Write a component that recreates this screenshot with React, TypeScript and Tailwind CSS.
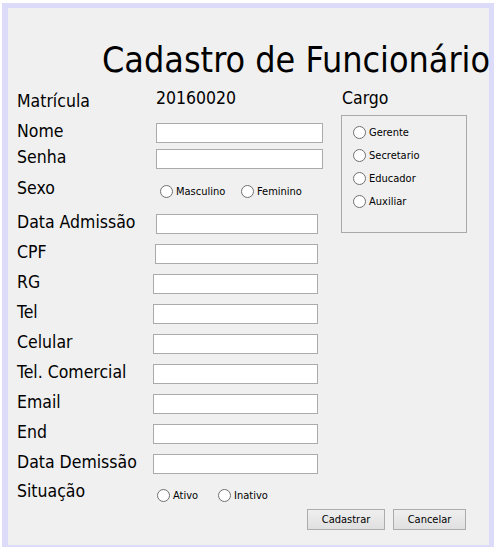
import React from "react";

function Radio({ label, className = "" }: { label: string; className?: string }) {
  return (
    <div className={"flex items-center " + className}>
      <span className="w-[13px] h-[13px] rounded-full border border-[#707070] bg-white shrink-0" />
      <span className="ml-[3px] text-[11px] leading-none text-black whitespace-nowrap">{label}</span>
    </div>
  );
}

function FieldRow({
  label,
  lw,
  fw,
  mt,
}: {
  label: string;
  lw: string;
  fw: string;
  mt: string;
}) {
  return (
    <div className={"flex items-center h-[20px] pl-[9px] " + mt}>
      <span className={"text-[17.5px] leading-none pb-[3px] whitespace-nowrap " + lw}>{label}</span>
      <input type="text" className={"h-[20px] border border-[#ababab] bg-white outline-none " + fw} />
    </div>
  );
}

export default function App() {
  return (
    <div className="w-[499px] h-[547px] bg-white overflow-hidden [font-family:'DejaVu_Sans_Condensed','DejaVu_Sans',sans-serif] text-black">
      <div className="ml-[2px] mt-[3px] w-[492px] h-[544px] border-l-[6px] border-t-[5px] border-r-[5px] border-b-[2px] border-[#dcdcfa] bg-[#f0f0f0] flex flex-col">
        <div className="mt-[28px] h-[48px] flex items-center pl-[94px] text-[35.6px] leading-none whitespace-nowrap">
          Cadastro de Funcionário
        </div>
        <div className="flex">
          <div className="w-[333px] flex flex-col">
            <div className="mt-[9px] flex items-center h-[20px] pl-[9px]">
              <span className="w-[139px] text-[17.5px] leading-none pb-[2px]">Matrícula</span>
              <span className="text-[17.5px] leading-none pb-[8px]">20160020</span>
            </div>
            <FieldRow label="Nome" lw="w-[139px]" fw="w-[167px]" mt="mt-[10px]" />
            <FieldRow label="Senha" lw="w-[139px]" fw="w-[167px]" mt="mt-[6px]" />
            <div className="mt-[11px] flex items-center h-[20px] pl-[9px]">
              <span className="w-[143px] text-[17.5px] leading-none pb-[3px]">Sexo</span>
              <div className="flex items-center pt-[2px]">
                <Radio label="Masculino" className="w-[81px]" />
                <Radio label="Feminino" />
              </div>
            </div>
            <FieldRow label="Data Admissão" lw="w-[139px]" fw="w-[162px]" mt="mt-[14px]" />
            <FieldRow label="CPF" lw="w-[138px]" fw="w-[163px]" mt="mt-[10px]" />
            <FieldRow label="RG" lw="w-[136px]" fw="w-[165px]" mt="mt-[10px]" />
            <FieldRow label="Tel" lw="w-[136px]" fw="w-[165px]" mt="mt-[10px]" />
            <FieldRow label="Celular" lw="w-[136px]" fw="w-[165px]" mt="mt-[10px]" />
            <FieldRow label="Tel. Comercial" lw="w-[136px]" fw="w-[165px]" mt="mt-[10px]" />
            <FieldRow label="Email" lw="w-[136px]" fw="w-[165px]" mt="mt-[10px]" />
            <FieldRow label="End" lw="w-[136px]" fw="w-[165px]" mt="mt-[10px]" />
            <FieldRow label="Data Demissão" lw="w-[136px]" fw="w-[165px]" mt="mt-[10px]" />
            <div className="mt-[9px] flex items-center h-[20px] pl-[9px]">
              <span className="w-[140px] text-[17.5px] leading-none pb-[3px]">Situação</span>
              <div className="flex items-center pt-[4px]">
                <Radio label="Ativo" className="w-[61px]" />
                <Radio label="Inativo" />
              </div>
            </div>
          </div>
          <div className="flex flex-col">
            <div className="mt-[9px] h-[20px] flex items-center pb-[8px] pl-[1px] text-[17.5px] leading-none">
              Cargo
            </div>
            <div className="mt-[2px] w-[126px] h-[118px] border border-[#a9a9a9] pt-[5px] pl-[11px] flex flex-col">
              <Radio label="Gerente" className="h-[23px]" />
              <Radio label="Secretario" className="h-[23px]" />
              <Radio label="Educador" className="h-[23px]" />
              <Radio label="Auxiliar" className="h-[23px]" />
            </div>
          </div>
        </div>
        <div className="mt-[6px] pl-[299px] flex gap-[8px]">
          <button className="w-[78px] h-[21px] border border-[#acacac] bg-gradient-to-b from-[#efefef] to-[#e0e0e0] text-[11px] leading-none text-black">
            Cadastrar
          </button>
          <button className="w-[73px] h-[21px] border border-[#acacac] bg-gradient-to-b from-[#efefef] to-[#e0e0e0] text-[11px] leading-none text-black">
            Cancelar
          </button>
        </div>
      </div>
    </div>
  );
}
